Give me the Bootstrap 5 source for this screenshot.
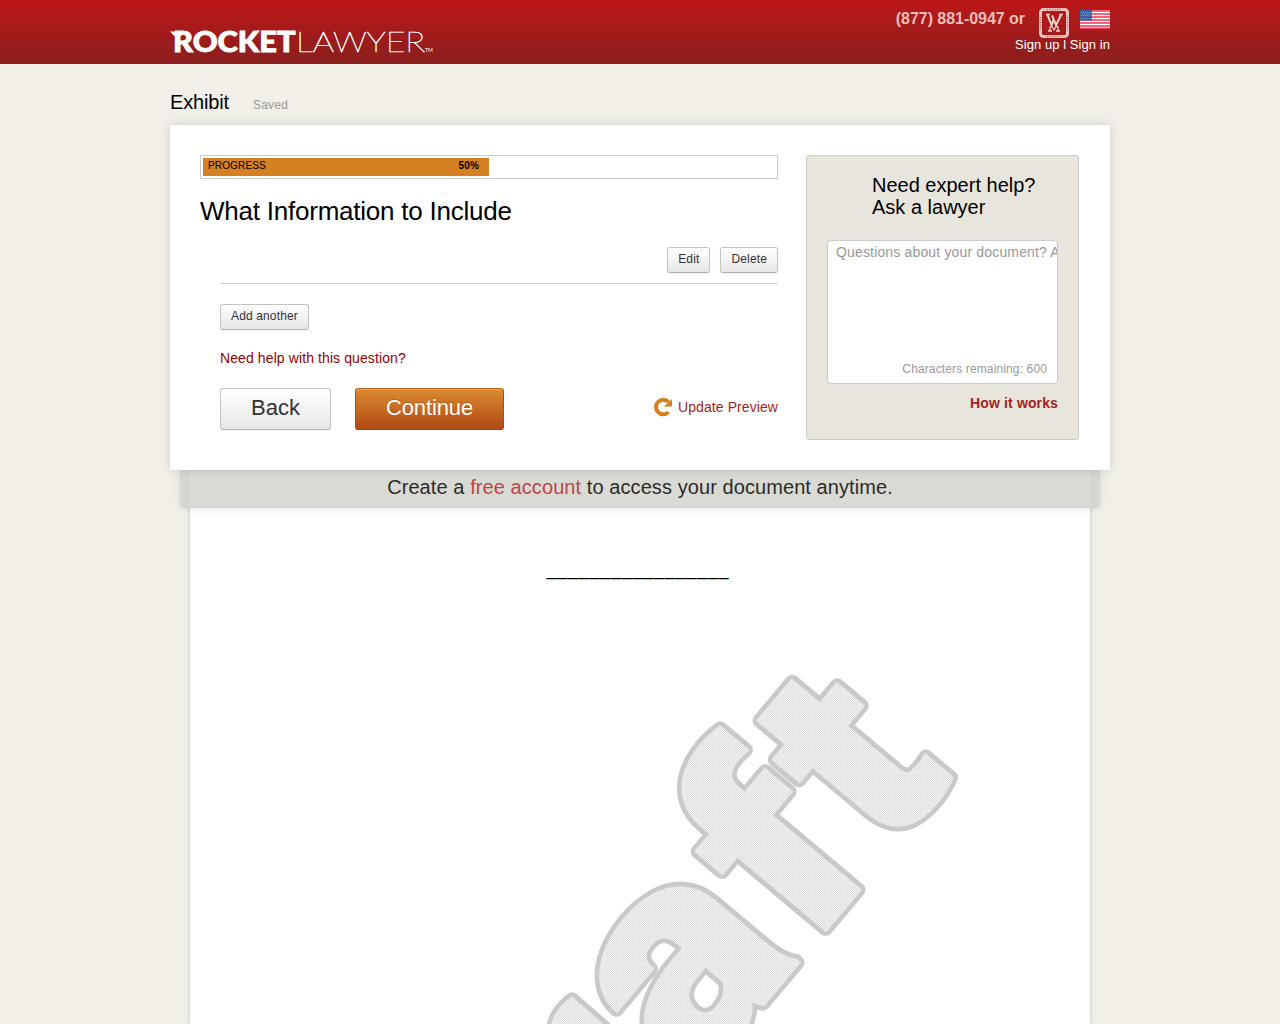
<!DOCTYPE html>
<html lang="en">
<head>
<meta charset="utf-8">
<title>Exhibit</title>
<link href="https://cdn.jsdelivr.net/npm/bootstrap@5.3.0/dist/css/bootstrap.min.css" rel="stylesheet">
<style>
body{background:#f1efe8;font-family:"Liberation Sans",Arial,sans-serif;font-size:14px;line-height:18px;color:#000;height:1024px;overflow:hidden}
a{text-decoration:none;color:#a91e22}
.wrap{width:940px;margin:0 auto}
.topbar{height:64px;background:linear-gradient(#bd1717,#8a1f1e);border-bottom:1px solid #85201f}
.logo{display:block;margin-top:24px}
.phone{font-size:16px;font-weight:700;color:#f0bcbc;line-height:20px;padding-top:9px;margin-right:14px;letter-spacing:-.04px}
.seal{margin-right:7px}
.userlinks{font-size:13px;line-height:16px;color:#fff;margin-top:-1px;letter-spacing:.06px}
.titlebar{height:61px;padding-top:26px}
.titlebar h1{font-size:20px;line-height:24px;margin:0;font-weight:400;letter-spacing:-.15px}
.saved{font-size:12px;color:#999;margin-left:24px;letter-spacing:.2px}
.sheet{height:345px;background:#fff;box-shadow:0 0 10px rgba(0,0,0,.13);padding:30px 31px 30px 30px;position:relative;z-index:3}
.mainq{width:578px}
.meter{height:24px;border:1px solid #ccc;padding:2px}
.meter-fill{height:18px;background:#d58021;font-size:10px;line-height:16px;padding:0 10px 0 5px;letter-spacing:.15px}
.qtitle{font-size:26px;line-height:30px;margin:17px 0 21px;font-weight:400;white-space:nowrap;letter-spacing:-.23px}
.indent{margin-left:20px}
.btn-soft{height:26px;padding:0 10px 2px;border:1px solid #c4c4c4;border-bottom-color:#b2b2b2;border-radius:3px;background:linear-gradient(#fff,#e6e6e6);font-size:12px;line-height:22px;color:#333;box-shadow:0 1px 2px rgba(0,0,0,.06);letter-spacing:.14px}
.pair{gap:10px}
.btn-big{height:42px;font-size:22px;line-height:38px;padding:0 30px 2px;letter-spacing:0}
.btn-go{color:#fff;background:linear-gradient(#dc8a32,#b04a12);border-color:#b9641d #a9500f #a04410;box-shadow:inset 0 1px 0 #e4a15a;text-shadow:0 -1px 0 rgba(0,0,0,.2);letter-spacing:-.12px}
.itemrow{height:37px;border-bottom:1px solid #ccc}
.addbtn{margin-top:20px}
.helplink{color:#990000;line-height:18px;margin:19px 0 21px;letter-spacing:.1px}
.refresh{padding-bottom:5px;letter-spacing:.08px}
.lawyer{width:273px;height:285px;background:#e8e5dc;border:1px solid #ccc;border-radius:3px;padding:18px 20px 0}
.lawyer h2{font-size:20px;line-height:22px;margin:0 0 22px 45px;font-weight:400}
.askbox{height:144px;background:#fff;border:1px solid #ccc;border-radius:4px;color:#999;overflow:hidden;white-space:nowrap;padding:2px 0 5px 8px;letter-spacing:.16px}
.remain{font-size:12px;padding-right:10px;letter-spacing:.13px}
.how{font-weight:700;margin-top:10px;letter-spacing:.13px}
.banner{width:920px;height:38px;margin:0 auto;background:rgba(209,209,201,.8);box-shadow:0 0 8px rgba(0,0,0,.12);position:relative;z-index:2;font-size:20px;line-height:35px;color:#2b2b2b;text-align:center;letter-spacing:.08px}
.banner a{color:#bd4446}
.paper{width:900px;height:554px;margin:-38px auto 0;background:#fff;box-shadow:0 0 4px rgba(0,0,0,.22)}
.paper svg{display:block}
.wm{font-family:Roboto,sans-serif;font-weight:900;font-size:280px}
.wm tspan{font-size:296px}
</style>
</head>
<body>
<header class="topbar"><div class="wrap d-flex justify-content-between">
<svg class="logo" width="266" height="34" fill="#fff" font-family="Lato, sans-serif">
<path d="M0 7.500h12v4.200H4z"/>
<text x="3" y="27.500" font-size="28.500" font-weight="900" textLength="122.500" lengthAdjust="spacingAndGlyphs" stroke="#fff" stroke-width=".9">ROCKET</text>
<text x="126" y="27.500" font-size="28.500" font-weight="200" textLength="129" lengthAdjust="spacingAndGlyphs" stroke="#fff" stroke-width=".6">LAWYER</text>
<text x="255" y="28" font-size="5" textLength="8" lengthAdjust="spacingAndGlyphs">TM</text>
</svg>
<div>
<div class="d-flex justify-content-end">
<div class="phone">(877) 881-0947 or</div>
<svg width="30" height="38" class="seal"><rect x="1.500" y="9.500" width="27" height="27" rx="3" fill="none" stroke="#efc0c0" stroke-width="3"/><path d="M8 9.500h14M8 36.500h14M1.500 17v13M28.500 17v13" stroke="#c75c5c" stroke-width="1.500" stroke-dasharray="1 1.500"/><g fill="none" stroke="#f4d2d2"><path d="M7 14.500h4M20 14.500h4" stroke-width="1.500"/><path d="M8.500 15l4 10L15 19M13 15.500l4 9.500L22 15" stroke-width="2"/><path d="M11 31v-3q0-2 2-1.500l2 3.500 2-3.500q2-.5 2 1.500v3M9 31h4M17 31h4" stroke-width="1.300"/></g></svg>
<svg width="30" height="38" class="ms-1"><rect y="10" width="30" height="19" fill="#fff"/><path d="M0 11h30M0 14h30M0 17h30M0 20h30M0 23h30M0 26h30M0 28.500h30" stroke="#f0304e" stroke-width="1.500"/><rect y="10" width="12" height="10.500" fill="#3c5f9f"/><path d="M1 12.500h11M1 15.500h11M1 18.500h11M2 14h10" stroke="#7d98c8" stroke-dasharray="1 1"/></svg>
</div>
<div class="userlinks text-end">Sign up l Sign in</div>
</div>
</div></header>
<main class="wrap">
<div class="titlebar d-flex align-items-baseline"><h1>Exhibit</h1><span class="saved">Saved</span></div>
<section class="sheet d-flex justify-content-between">
<div class="mainq">
<div class="meter"><div class="meter-fill d-flex justify-content-between" style="width:50%"><span>PROGRESS</span><b>50%</b></div></div>
<h2 class="qtitle">What Information to Include</h2>
<div class="indent">
<div class="itemrow pair d-flex justify-content-end align-items-start"><button class="btn btn-soft">Edit</button><button class="btn btn-soft">Delete</button></div>
<button class="btn btn-soft addbtn d-block">Add another</button>
<div class="helplink">Need help with this question?</div>
<div class="d-flex align-items-center"><button class="btn btn-soft btn-big me-4">Back</button><button class="btn btn-soft btn-big btn-go">Continue</button>
<a href="#" class="refresh ms-auto d-flex align-items-center"><svg class="me-1" width="21" height="20"><path d="M15.500 4.900A7.300 7.300 0 1 0 15.500 15.100" fill="none" stroke="#d58021" stroke-width="4"/><path d="M19 2v7.500H11z" fill="#d58021"/></svg>Update Preview</a></div>
</div>
</div>
<aside class="lawyer">
<h2>Need expert help?<br>Ask a lawyer</h2>
<div class="askbox d-flex flex-column justify-content-between"><span>Questions about your document? A</span><span class="remain text-end">Characters remaining: 600</span></div>
<div class="how text-end"><a href="#">How it works</a></div>
</aside>
</section>
<div class="banner">Create a <a href="#">free account</a> to access your document anytime.</div>
<div class="paper">
<svg width="900" height="554">
<defs>
<pattern id="dot" width="16" height="16" patternUnits="userSpaceOnUse"><rect width="16" height="16" fill="#eaeaea"/><path d="M0 .5h12M1 1.500h12M0 2.500h12M1 3.500h12M0 4.500h12M1 5.500h12M0 6.500h12M1 7.500h12M0 8.500h12M1 9.500h12M0 10.500h12M1 11.500h12" stroke="#dadada" stroke-dasharray="1 1"/><path d="M1 .5h12M0 1.500h12M1 2.500h12M0 3.500h12M1 4.500h12M0 5.500h12M1 6.500h12M0 7.500h12M1 8.500h12M0 9.500h12M1 10.500h12M0 11.500h12" stroke="#f5f5f5" stroke-dasharray="1 1"/></pattern>
<mask id="draft" maskUnits="userSpaceOnUse" x="0" y="0" width="900" height="554">
<g class="wm" transform="translate(622.800 474.400) rotate(-50) scale(1.080 1)" fill="#fff" stroke="#fff" stroke-width="5"><text x="-475 -286 -173 -4 107">Dr<tspan>a</tspan>ft</text></g></mask>
</defs>
<text x="356.500" y="105" font-family="Liberation Sans" font-size="18" textLength="182">_________________</text>
<g class="wm" transform="translate(622.800 474.400) rotate(-50) scale(1.080 1)" fill="#c9c9c9" stroke="#c9c9c9" stroke-width="14" stroke-linejoin="round" aria-hidden="true"><text x="-475 -286 -173 -4 107">Dr<tspan>a</tspan>ft</text></g>
<rect width="900" height="554" fill="url(#dot)" mask="url(#draft)"/>
</svg>
</div>
</main>
<script src="https://cdn.jsdelivr.net/npm/bootstrap@5.3.0/dist/js/bootstrap.bundle.min.js"></script>
</body>
</html>
